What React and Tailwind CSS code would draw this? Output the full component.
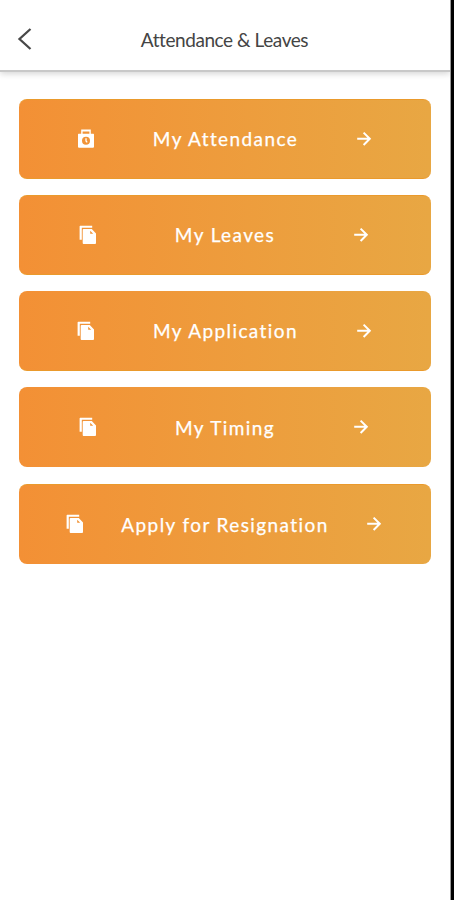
import React from "react";

const items = [
  { label: "My Attendance", icon: "punch", inset: "pl-[57px] pr-[57px]", border: "border-y" },
  { label: "My Leaves", icon: "copy", inset: "pl-[59px] pr-[60px]", border: "border-y" },
  { label: "My Application", icon: "copy", inset: "pl-[57px] pr-[57px]", border: "border-b" },
  { label: "My Timing", icon: "copy", inset: "pl-[59px] pr-[60px]", border: "" },
  { label: "Apply for Resignation", icon: "copy", inset: "pl-[46px] pr-[47px]", border: "border-t" },
];

function PunchIcon() {
  return (
    <svg className="h-5 w-5" viewBox="0 0 20 20" fill="none">
      <path
        fill="#fff"
        fillRule="evenodd"
        d="M5.2 0.6h9.6v4.2H17.4a.6.6 0 0 1 .6.6v12.4a1 1 0 0 1-1 1H3a1 1 0 0 1-1-1V5.4a.6.6 0 0 1 .6-.6h2.6V.6zM6.6 2.6v2.2h6.8V2.6H6.6zM10 7.7a4 4 0 1 0 0 8 4 4 0 0 0 0-8z"
      />
      <path stroke="#fff" strokeWidth="1.3" d="M10 9.2v2.8l1.2 1.4" />
    </svg>
  );
}

function CopyIcon() {
  return (
    <svg className="h-5 w-5" viewBox="0 0 20 20" fill="none">
      <path fill="#fff" d="M2.3.8h11.9v1.9H3.8v12H1.6V1.5a.7.7 0 0 1 .7-.7z" />
      <path
        fill="#fff"
        fillRule="evenodd"
        d="M5.6 4h8.2l4.2 4.5v9.6a.9.9 0 0 1-.9.9H5.6a.9.9 0 0 1-.9-.9V4.9a.9.9 0 0 1 .9-.9zM12.2 5.8v3h3l-3-3z"
      />
    </svg>
  );
}

function ArrowIcon() {
  return (
    <svg className="h-5 w-5" viewBox="0 0 20 20" fill="none">
      <path stroke="#fff" strokeWidth="2" d="M3.2 9.8h12.6M9.6 3.6l6.2 6.2-6.2 6.2" />
    </svg>
  );
}

function MenuButton({ item }) {
  return (
    <button
      type="button"
      className={`flex h-20 w-full items-center justify-between rounded-lg border-[#ea9a2c] bg-gradient-to-r from-[#f39035] to-[#e8a743] text-white ${item.border} ${item.inset}`}
    >
      {item.icon === "punch" ? <PunchIcon /> : <CopyIcon />}
      <span className="pt-px pl-px text-[19px] leading-6 tracking-[1.4px] whitespace-nowrap [-webkit-text-stroke:0.25px_#fff]">
        {item.label}
      </span>
      <ArrowIcon />
    </button>
  );
}

export default function App() {
  return (
    <div className="flex h-[900px] w-[454px] bg-white font-['Lato',sans-serif]">
      <div className="flex flex-1 flex-col">
        <header className="grid h-[72px] grid-cols-[48px_1fr_48px] items-center border-b-2 border-[#c8c8c8] pt-2 shadow-[0_2px_6px_rgba(0,0,0,0.16)]">
          <button type="button" className="pl-[17px]" aria-label="Back">
            <svg className="h-6 w-4" viewBox="0 0 16 24" fill="none">
              <path d="M13.5 2L2.5 12l11 10" stroke="#484848" strokeWidth="2.3" />
            </svg>
          </button>
          <h1 className="pt-[3px] pr-px text-center text-[19px] tracking-[-0.43px] text-[#444444]">
            Attendance &amp; Leaves
          </h1>
        </header>
        <main className="flex flex-col gap-[16.3px] pt-[26.6px] pr-[19px] pl-[19px]">
          {items.map((item) => (
            <MenuButton key={item.label} item={item} />
          ))}
        </main>
      </div>
      <div className="w-1 border-l border-[#999999] bg-black" />
    </div>
  );
}
